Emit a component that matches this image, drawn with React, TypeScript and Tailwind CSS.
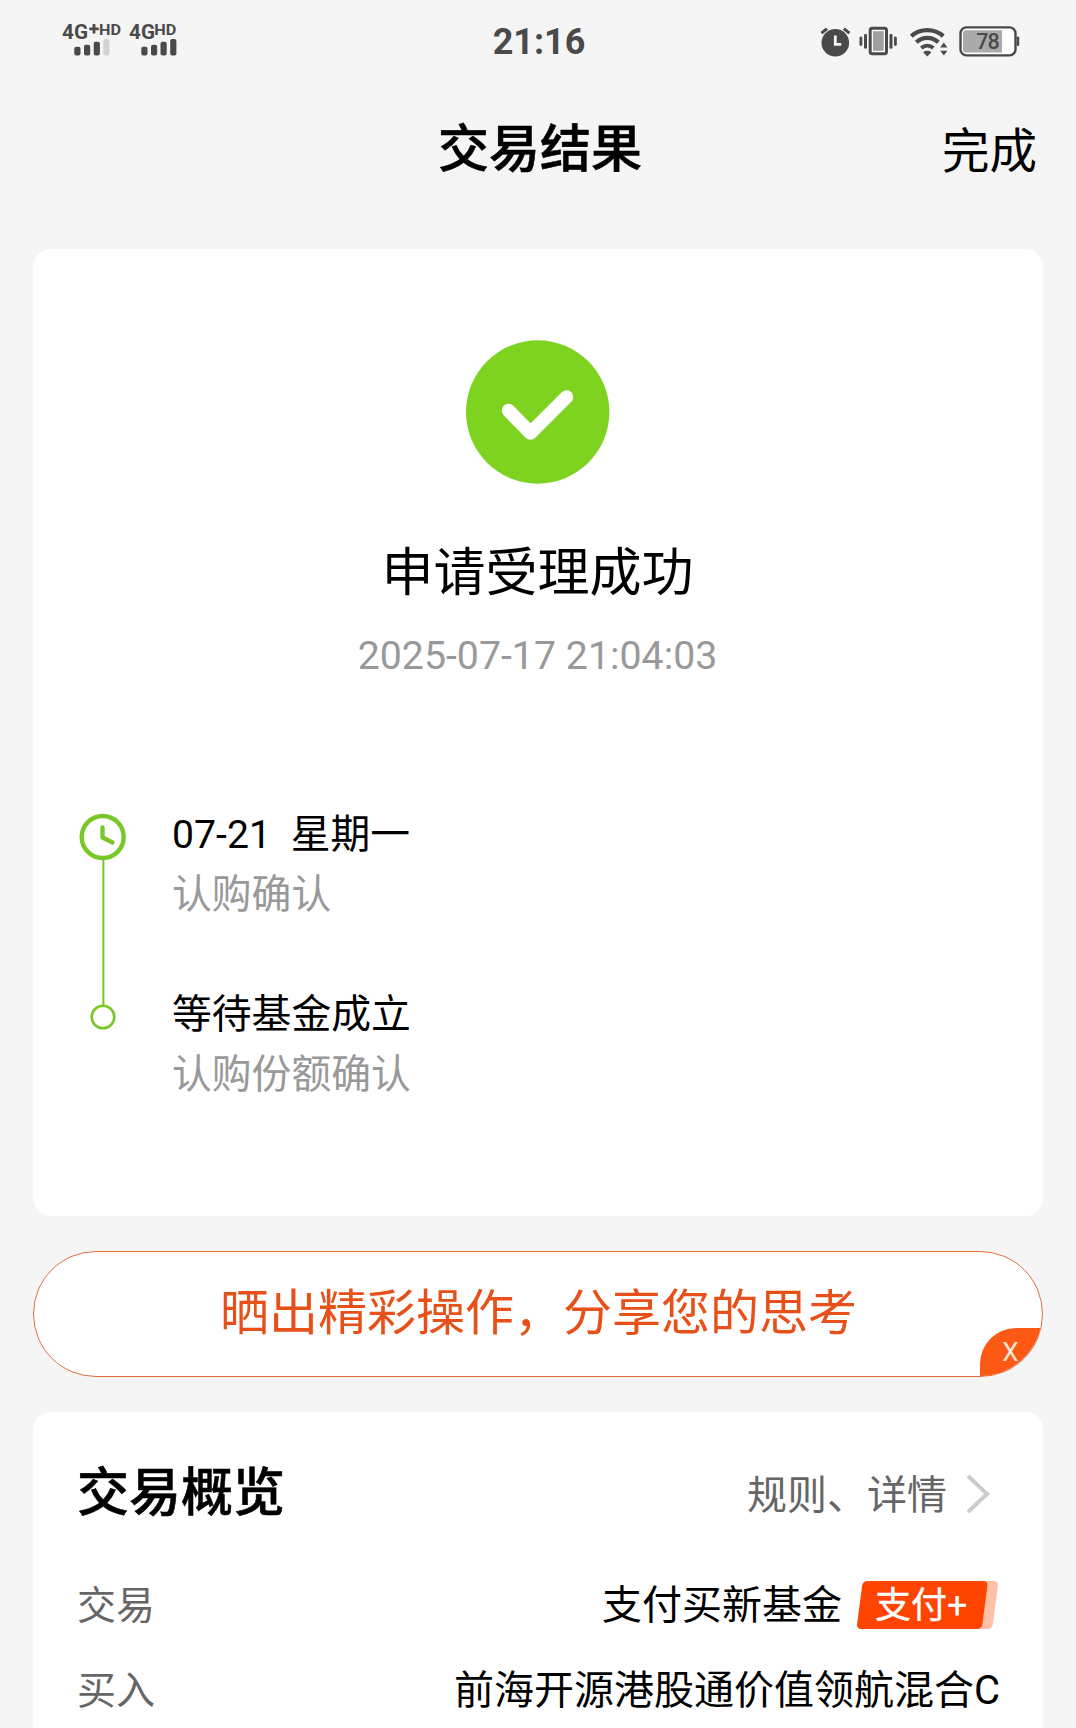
const steps = [
  { date: '07-21', title: '  星期一', note: '认购确认' },
  { date: '', title: '等待基金成立', note: '认购份额确认' },
]

function SignalPrimary() {
  return (
    <svg width="62" height="36" viewBox="0 0 62 36" fill="#4a4a4a" className="font-bold">
      <text x="0" y="18.7" fontSize="21" textLength="26" lengthAdjust="spacingAndGlyphs">4G</text>
      <path d="M27.2 8.8h9.6M32 4v9.6" stroke="#4a4a4a" strokeWidth="2.8" />
      <text x="37" y="14.5" fontSize="14.5" textLength="22" lengthAdjust="spacingAndGlyphs">HD</text>
      <rect x="12.3" y="26.7" width="6.2" height="8.8" rx="2" />
      <rect x="22" y="24.7" width="6.2" height="10.8" rx="2" />
      <rect x="31.7" y="21.7" width="6.2" height="13.8" rx="2" />
      <rect x="41.3" y="19" width="6.2" height="16.5" rx="2" fill="#d2d2d2" />
    </svg>
  )
}

function SignalSecondary() {
  return (
    <svg width="50" height="36" viewBox="0 0 50 36" fill="#4a4a4a" className="font-bold">
      <text x="0" y="18.7" fontSize="21" textLength="26" lengthAdjust="spacingAndGlyphs">4G</text>
      <text x="25.3" y="14.5" fontSize="14.5" textLength="22" lengthAdjust="spacingAndGlyphs">HD</text>
      <rect x="12.3" y="26.7" width="6.2" height="8.8" rx="2" />
      <rect x="22" y="24.7" width="6.2" height="10.8" rx="2" />
      <rect x="31.5" y="21.7" width="6.2" height="13.8" rx="2" />
      <rect x="41.2" y="19" width="6.2" height="16.5" rx="2" />
    </svg>
  )
}

function AlarmIcon() {
  return (
    <svg width="31" height="32" viewBox="0 0 31 32" fill="none">
      <circle cx="15.3" cy="16.7" r="13.8" fill="#4a4a4a" />
      <path d="M1.5 7.2 7 2.6M23.8 2.6l5.6 4.6" stroke="#4a4a4a" strokeWidth="3" />
      <path d="M15.3 9.5v8.8h6" stroke="#f5f5f5" strokeWidth="2.8" />
    </svg>
  )
}

function VibrateIcon() {
  return (
    <svg width="38" height="32" viewBox="0 0 38 32" fill="#4a4a4a">
      <rect x="11.2" y="2.2" width="16.3" height="25.6" rx="2" fill="#fff" stroke="#4a4a4a" strokeWidth="3" />
      <rect x="14" y="5.2" width="10.7" height="19.6" fill="#a0a0a0" />
      <rect x="0.5" y="10.5" width="2.8" height="9.5" rx="1.4" />
      <rect x="5" y="7.8" width="3" height="15" rx="1.5" />
      <rect x="30.5" y="7.8" width="3" height="15" rx="1.5" />
      <rect x="35" y="10.5" width="2.8" height="9.5" rx="1.4" />
    </svg>
  )
}

function WifiIcon() {
  return (
    <svg width="38" height="32" viewBox="0 0 38 32" fill="none" stroke="#4a4a4a">
      <path d="M1.3 10.2C10.5 2.2 24.1 2.2 33.3 10.2" strokeWidth="4.3" />
      <path d="M6.3 16.2C12.6 10.4 22 10.4 28.3 16.2" strokeWidth="4.2" />
      <path d="M11.3 22c3.6-3 8.4-3 12 0" strokeWidth="4" />
      <path d="M13.2 26.2c2.5-1.8 5.7-1.8 8.2 0l-4.1 4.2z" fill="#4a4a4a" stroke="none" />
      <path d="M33.8 16.6 37.4 21.4h-7.2zM33.8 29.6l3.6-4.8h-7.2z" fill="#4a4a4a" stroke="none" />
    </svg>
  )
}

function BatteryIcon() {
  return (
    <svg width="61" height="32" viewBox="0 0 61 32" fill="#4a4a4a">
      <rect x="1.5" y="1.4" width="55" height="28" rx="6" fill="#fff" stroke="#4a4a4a" strokeWidth="2.4" />
      <path d="M7 4.2h36v22.4H7a3 3 0 0 1-3-3V7.2a3 3 0 0 1 3-3z" fill="#aaa" />
      <rect x="57.8" y="10.5" width="2.4" height="9.6" rx="1" />
      <text x="17.3" y="22.5" fontSize="21.5" textLength="23.5" className="font-medium">78</text>
    </svg>
  )
}

function StatusBar() {
  return (
    <div className="flex h-[82px] items-start text-[#4a4a4a]">
      <div className="flex flex-1 gap-[5px] pt-5 pl-[62px]">
        <SignalPrimary />
        <SignalSecondary />
      </div>
      <span className="pt-px pr-[4px] text-[36px] leading-[82px] font-bold">21:16</span>
      <div className="flex flex-1 justify-end pt-[26px] pr-[56px]">
        <AlarmIcon />
        <span className="ml-2"><VibrateIcon /></span>
        <span className="ml-[13px]"><WifiIcon /></span>
        <span className="ml-[11px]"><BatteryIcon /></span>
      </div>
    </div>
  )
}

function Timeline() {
  return (
    <div className="mt-[120px] flex pl-[46px]">
      <svg width="48" height="218" viewBox="0 0 48 218" fill="none" stroke="#79c728" className="mt-[9px]">
        <circle cx="23.7" cy="24" r="21" strokeWidth="4.4" />
        <path d="M23.5 14.5v10l10 5" strokeWidth="4.4" strokeLinecap="round" strokeLinejoin="round" />
        <path d="M24.4 46v146" strokeWidth="2" />
        <circle cx="24" cy="204" r="11.3" strokeWidth="2.6" />
      </svg>
      <div className="ml-[45px] flex flex-col gap-[60px] pt-px text-[39.8px] leading-[60px]">
        {steps.map((step) => (
          <div key={step.note}>
            <p className="whitespace-pre text-black">
              <span className="text-[39.2px]">{step.date}</span>
              {step.title}
            </p>
            <p className="text-[#999]">{step.note}</p>
          </div>
        ))}
      </div>
    </div>
  )
}

function PayBadge() {
  return (
    <span className="relative flex h-12 w-[143px] items-center">
      <svg width="143" height="48" viewBox="0 0 143 48" className="absolute inset-0">
        <path d="M20 0h117.5q5 0 4.4 5l-5 38q-.7 5-5.7 5H20z" fill="#ffc0a8" />
        <path d="M12 0h115q5 0 4.4 5l-5 38q-.7 5-5.7 5H5.500q-5 0-4.400-5l5-38q.7-5 5.900-5z" fill="#ff4400" />
      </svg>
      <span className="relative pt-[2px] pl-[19px] text-[36px] leading-[48px] text-white">
        <span className="[-webkit-text-stroke:0.4px_white]">支付</span>+
      </span>
    </span>
  )
}

export default function App() {
  return (
    <div className="h-[1728px] overflow-hidden bg-[#f5f5f5] font-[Roboto,'Noto_Sans_CJK_SC',sans-serif]">
      <StatusBar />

      <header className="flex h-[132px] items-center pr-[39px]">
        <span className="flex-1" />
        <h1 className="pt-[3px] pl-[43px] text-[51px] leading-[72px] font-medium text-black [-webkit-text-stroke:0.6px_black]">交易结果</h1>
        <span className="flex-1 pt-[8px] text-right text-[47.5px] leading-[72px] text-black">完成</span>
      </header>

      <main className="flex flex-col gap-[35px] px-[33px] pt-[35px]">
        <section className="h-[967px] rounded-[18px] bg-white pt-[91px]">
          <div className="flex flex-col items-center pr-px">
            <svg width="144" height="144" viewBox="0 0 144 144" fill="none">
              <circle cx="71.7" cy="72" r="71.7" fill="#7ed321" />
              <path d="M42.5 70.5 64.5 93l36-36" stroke="#fff" strokeWidth="13.5" strokeLinecap="round" strokeLinejoin="round" />
            </svg>
            <h2 className="mt-[54px] text-[52px] leading-[72px] text-black">申请受理成功</h2>
            <p className="mt-[18px] text-[39.3px] leading-[56px] text-[#999]">2025-07-17 21:04:03</p>
          </div>
          <Timeline />
        </section>

        <div className="relative flex h-[126px] items-center justify-center overflow-hidden rounded-full border-[1.5px] border-[#e0703f] bg-white">
          <span className="pb-px pl-px text-[49px] leading-[70px] text-[#e8501a]">晒出精彩操作，分享您的思考</span>
          <button
            type="button"
            className="absolute right-0 bottom-0 h-12 w-[62px] rounded-tl-[36px] bg-[#fc5a14] pr-px text-[26px] leading-[48px] text-[#ffe9dc]"
          >
            X
          </button>
        </div>

        <section className="h-[340px] rounded-t-[18px] bg-white pt-[45px] pr-[43px] pl-[44px]">
          <div className="flex h-[74px] items-center justify-between">
            <h2 className="text-[52px] leading-[72px] font-medium text-black [-webkit-text-stroke:0.6px_black]">交易概览</h2>
            <div className="flex items-center pr-[10px] text-[40px] leading-[60px] text-[#666]">
              <span className="pt-[3px]">规则、详情</span>
              <svg width="24" height="40" viewBox="0 0 24 40" fill="none" className="ml-[19px]">
                <path d="M2 2l19 18L2 38" stroke="#ccc" strokeWidth="4" />
              </svg>
            </div>
          </div>
          <div className="mt-[44px] flex h-[60px] items-center justify-between text-[40px] leading-[60px]">
            <span className="pt-px text-[39px] text-[#666]">交易</span>
            <div className="flex items-center gap-[14px] pr-px">
              <span className="pt-[2px] text-black">支付买新基金</span>
              <PayBadge />
            </div>
          </div>
          <div className="mt-[25px] flex h-[60px] items-center justify-between text-[40px] leading-[60px]">
            <span className="pt-px text-[39px] text-[#666]">买入</span>
            <span className="pt-[2px] text-black">前海开源港股通价值领航混合C</span>
          </div>
        </section>
      </main>
    </div>
  )
}
